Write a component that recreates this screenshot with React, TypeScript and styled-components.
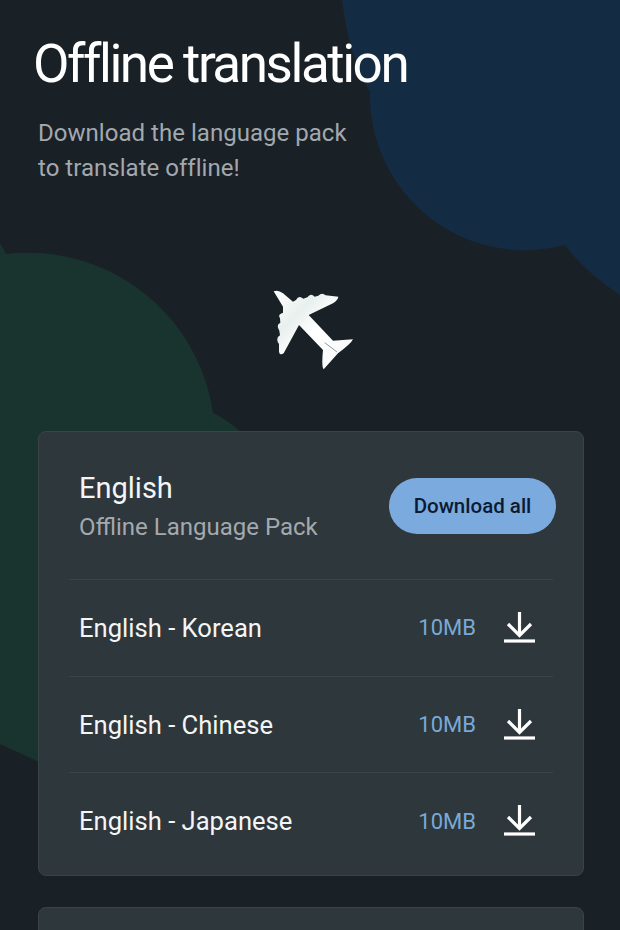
import React from 'react';
import styled, {createGlobalStyle} from 'styled-components';

const GlobalStyle = createGlobalStyle`
  html, body {
    margin: 0;
    padding: 0;
    background: #192127;
  }
`;

const Page = styled.div`
  position: relative;
  width: 620px;
  height: 930px;
  overflow: hidden;
  background: #192127;
  font-family: Roboto, "Liberation Sans", sans-serif;
`;

const Backdrop = styled.svg`
  position: absolute;
  left: 0;
  top: 0;
`;

const Content = styled.div`
  position: relative;
  display: flex;
  flex-direction: column;
  height: 100%;
  padding: 33px 36px 0 38px;
  box-sizing: border-box;
`;

const Title = styled.h1`
  margin: 0 0 0 -5px;
  font-size: 53px;
  line-height: 62px;
  font-weight: 400;
  letter-spacing: -2.45px;
  color: #ffffff;
  white-space: nowrap;
`;

const Subtitle = styled.p`
  margin: 21px 0 0;
  font-size: 24px;
  line-height: 35px;
  font-weight: 400;
  letter-spacing: 0.03px;
  color: #a3a8ae;
`;

const PlaneWrap = styled.div`
  display: flex;
  justify-content: center;
  margin: 104px 0 0 3px;
  height: 80px;
`;

const Card = styled.section`
  display: flex;
  flex-direction: column;
  flex-shrink: 0;
  box-sizing: border-box;
  margin-top: 61px;
  height: 445px;
  padding: 0 30px 6px;
  background: #2e373c;
  border: 1px solid #3a4348;
  border-radius: 8px;
`;

const NextCard = styled(Card)`
  margin-top: 31px;
`;

const CardHeader = styled.div`
  display: flex;
  align-items: center;
  justify-content: space-between;
  height: 147px;
  box-sizing: border-box;
  padding: 0 0 0 10px;
  margin-right: -3px;
`;

const Language = styled.div`
  font-size: 29px;
  line-height: 36px;
  color: #f4f5f6;
`;

const PackLabel = styled.div`
  margin-top: 7px;
  font-size: 24px;
  line-height: 28px;
  font-weight: 400;
  color: #a4a9ae;
`;

const DownloadAll = styled.button`
  width: 167px;
  height: 56px;
  padding: 0;
  border: none;
  border-radius: 28px;
  background: #7baadf;
  color: #0b1b33;
  font-family: inherit;
  font-size: 20.5px;
  font-weight: 500;
`;

const Row = styled.div`
  display: flex;
  flex: 1;
  align-items: center;
  padding: 0 18px 0 10px;
  border-top: 1px solid #3b4449;
`;

const RowName = styled.span`
  flex: 1;
  font-size: 25.6px;
  color: #f4f5f6;
`;

const Size = styled.span`
  font-size: 22px;
  font-weight: 400;
  color: #79a9d6;
`;

const IconButton = styled.span`
  display: flex;
  margin: -2px 0 0 27px;
`;

const DownloadIcon = () => (
    <svg width="32" height="32" viewBox="0 0 32 32" fill="none" stroke="#ffffff" strokeWidth="3.2">
        <path d="M16.5 1 V24"/>
        <path d="M5 13 L16.5 24.5 L28 13"/>
        <path d="M1 30 H32"/>
    </svg>
);

const Plane = () => (
    <svg width="80" height="80" viewBox="130 60 240 240">
        <defs>
            <linearGradient id="planeBody" x1="0" y1="0" x2="1" y2="1">
                <stop offset="0" stopColor="#ffffff"/>
                <stop offset="0.3" stopColor="#e8f0ee"/>
                <stop offset="0.5" stopColor="#ffffff"/>
                <stop offset="1" stopColor="#f6f9fa"/>
            </linearGradient>
        </defs>
        <path
            fill="url(#planeBody)"
            d="M132 64 Q145 58 160 70 L190 95 L199 90 Q207 74 221 86 L233 82 Q243 68 255 80 L266 77 Q277 66 288 76 L326 80 Q325 90 310 100 L237 135 L310 212 L370 208 Q365 220 325 250 L282 298 Q275 290 280 240 L208 165 L162 250 Q150 258 148 245 L148 222 Q136 205 151 196 L149 182 Q138 165 152 158 L151 145 Q143 133 160 128 L160 110 Z"
        />
        <path d="M285 218 L322 246" stroke="#8f9ba3" strokeWidth="3" fill="none"/>
    </svg>
);

const rows = ['English - Korean', 'English - Chinese', 'English - Japanese'];

export default function App() {
    return (
        <Page>
            <GlobalStyle/>
            <Backdrop width="620" height="930" viewBox="0 0 620 930">
                <path
                    fill="#142c43"
                    d="M342 0 Q350 60 370 92 A155 155 0 0 0 565 245 Q585 272 620 295 V0 Z"
                />
                <path
                    fill="#19342f"
                    d="M0 243 L6 254 A187 187 0 0 1 213 413 Q228 420 243 434 L243 780 L37 761 L0 744 Z"
                />
            </Backdrop>
            <Content>
                <Title>Offline translation</Title>
                <Subtitle>Download the language pack<br/>to translate offline!</Subtitle>
                <PlaneWrap><Plane/></PlaneWrap>
                <Card>
                    <CardHeader>
                        <div>
                            <Language>English</Language>
                            <PackLabel>Offline Language Pack</PackLabel>
                        </div>
                        <DownloadAll>Download all</DownloadAll>
                    </CardHeader>
                    {rows.map((name) => (
                        <Row key={name}>
                            <RowName>{name}</RowName>
                            <Size>10MB</Size>
                            <IconButton><DownloadIcon/></IconButton>
                        </Row>
                    ))}
                </Card>
                <NextCard/>
            </Content>
        </Page>
    );
}
